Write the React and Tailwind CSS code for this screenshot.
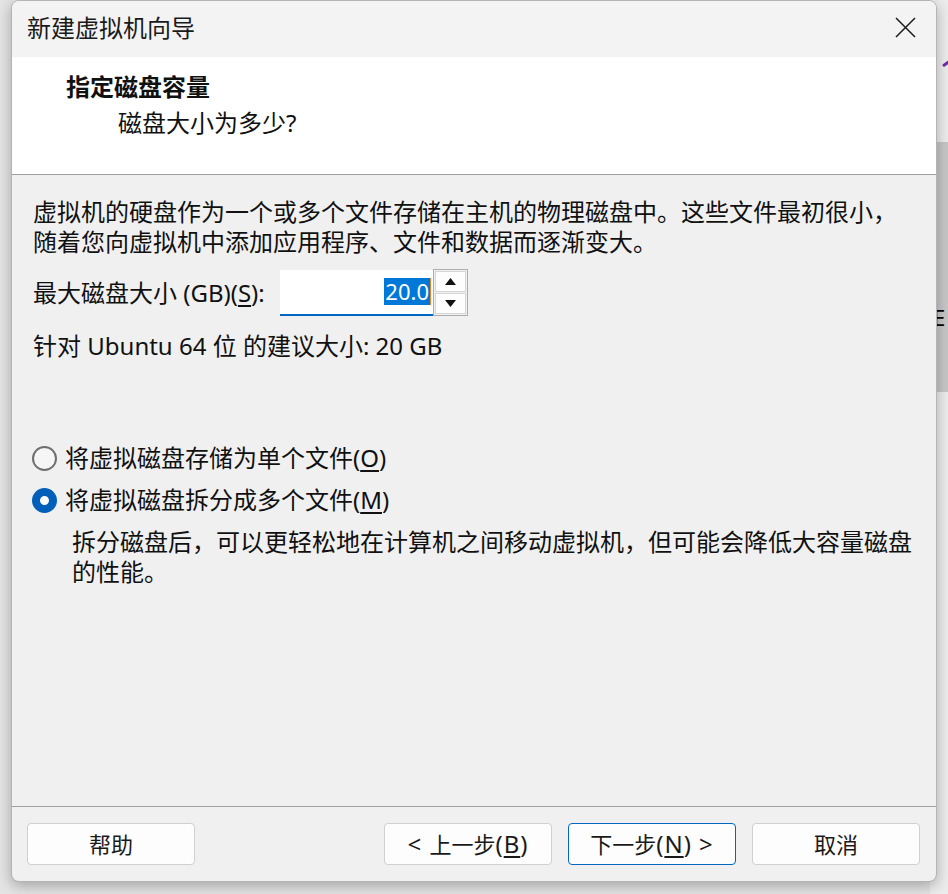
import React from "react";

const font = { fontFamily: '"Noto Sans", "Noto Sans CJK SC", sans-serif' };

function Btn({ children, primary }) {
  return (
    <div
      className={
        "flex h-[42px] w-[168px] items-center justify-center rounded-[4px] border bg-[#fdfdfd] text-[22px] text-[#1a1a1a] " +
        (primary ? "border-[#0067c0]" : "border-[#d0d0d0]")
      }
    >
      {children}
    </div>
  );
}

function L({ children }) {
  return <span className="text-[24px] tracking-[1px]">{children}</span>;
}

function U({ children }) {
  return <span className="underline underline-offset-[3px]">{children}</span>;
}

export default function App() {
  return (
    <div
      className="relative h-[894px] w-[948px] overflow-hidden bg-[#e4e4e4]"
      style={font}
    >
      {/* desktop behind the dialog */}
      <div className="absolute left-[930px] top-0 h-[894px] w-[18px] bg-[#ececec]" />
      <div className="absolute left-[930px] top-[142px] h-[250px] w-[18px] bg-[#c6c6c6]" />
      <div className="absolute left-[942px] top-[62px] h-[3px] w-[9px] -rotate-[35deg] rounded-sm bg-[#7030a0]" />
      <div className="absolute left-[933px] top-[302px] text-[22px] leading-[30px] text-black">E</div>

      {/* dialog window */}
      <div className="relative ml-[11px] flex h-[882px] w-[926px] flex-col overflow-hidden rounded-[8px] border border-[#b4b4b4] bg-[#f0f0f0] shadow-[0_4px_14px_rgba(0,0,0,0.28)]">
        {/* title bar */}
        <div className="flex h-[56px] shrink-0 items-center justify-between bg-[#f3f3f3] pb-[3px] pl-[15px] pr-[20px]">
          <span className="text-[24px] leading-none text-[#1a1a1a]">新建虚拟机向导</span>
          <svg width="21" height="21" viewBox="0 0 21 21" className="text-[#1a1a1a]">
            <path d="M1 1 L20 20 M20 1 L1 20" stroke="currentColor" strokeWidth="1.5" fill="none" />
          </svg>
        </div>

        {/* header */}
        <div className="flex h-[118px] shrink-0 flex-col border-b border-[#a0a0a0] bg-white pl-[54px] pt-[14px]">
          <div className="text-[24px] font-bold leading-[32px] text-[#111]">指定磁盘容量</div>
          <div className="mt-[4px] pl-[52px] text-[24px] leading-[32px] text-[#111]">磁盘大小为多少?</div>
        </div>

        {/* body */}
        <div className="flex flex-1 flex-col pl-[21px] pt-[22px] text-[24px] leading-[30px] text-[#111]">
          <div>虚拟机的硬盘作为一个或多个文件存储在主机的物理磁盘中。这些文件最初很小，</div>
          <div>随着您向虚拟机中添加应用程序、文件和数据而逐渐变大。</div>

          <div className="mt-[12px] flex items-center">
            <span className="w-[247px]">
              最大磁盘大小 (GB)(<U>S</U>):
            </span>
            <div className="flex h-[46px] w-[153px] items-center justify-end border-b-[2px] border-[#0067c0] bg-white pr-[2px]">
              <span className="bg-[#0078d7] px-[1px] text-[22px] leading-[27px] text-white">20.0</span>
              <span className="h-[27px] w-[1px] bg-[#f08020]" />
            </div>
            <div className="flex h-[47px] w-[35px] flex-col gap-[1px] border border-[#adadad] bg-[#f0f0f0] p-[1px]">
              <div className="flex flex-1 items-center justify-center border border-[#d6d6d6] bg-[#fdfdfd]">
                <svg width="11" height="7" viewBox="0 0 11 7"><path d="M5.5 0 L11 7 L0 7 Z" fill="#111" /></svg>
              </div>
              <div className="flex flex-1 items-center justify-center border border-[#d6d6d6] bg-[#fdfdfd]">
                <svg width="11" height="7" viewBox="0 0 11 7"><path d="M0 0 L11 0 L5.5 7 Z" fill="#111" /></svg>
              </div>
            </div>
          </div>

          <div className="mt-[15px]">针对 Ubuntu 64 位 的建议大小: 20 GB</div>

          <div className="mt-[82px] flex items-center">
            <span className="ml-[-1px] box-border h-[25px] w-[25px] rounded-full border-[2px] border-[#6f6f6f] bg-[#f6f6f6]" />
            <span className="ml-[8px]">
              将虚拟磁盘存储为单个文件(<U>O</U>)
            </span>
          </div>
          <div className="mt-[12px] flex items-center">
            <span className="ml-[-1px] box-border h-[25px] w-[25px] rounded-full border-[8px] border-[#005fb8] bg-white" />
            <span className="ml-[8px]">
              将虚拟磁盘拆分成多个文件(<U>M</U>)
            </span>
          </div>
          <div className="mt-[12px] pl-[39px] pr-[16px]">
            拆分磁盘后，可以更轻松地在计算机之间移动虚拟机，但可能会降低大容量磁盘的性能。
          </div>
        </div>

        {/* footer */}
        <div className="flex h-[75px] shrink-0 items-center border-t border-[#a0a0a0] pl-[15px] pr-[16px]">
          <Btn>帮助</Btn>
          <div className="flex-1" />
          <div className="flex gap-[16px]">
            <Btn>
              <L>&lt;&nbsp;</L>上一步<L>(<U>B</U>)</L>
            </Btn>
            <Btn primary>
              下一步<L>(<U>N</U>)&nbsp;&gt;</L>
            </Btn>
            <Btn>取消</Btn>
          </div>
        </div>
      </div>
    </div>
  );
}
